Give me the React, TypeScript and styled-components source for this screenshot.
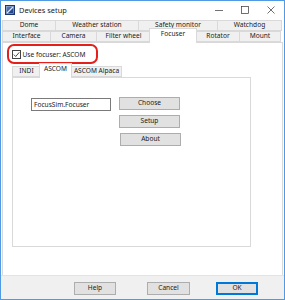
import React from "react";
import styled, { createGlobalStyle } from "styled-components";

const Global = createGlobalStyle`
  html, body { margin: 0; padding: 0; background: #fff; }
  body { font-family: "Noto Sans", "Open Sans", sans-serif; }
  * { box-sizing: border-box; }
`;

const Window = styled.div`
  width: 285px;
  height: 300px;
  border: 1px solid #4f9ae3;
  display: flex;
  flex-direction: column;
  background: #fff;
  font-size: 6.6px;
  color: #1a1a1a;
`;

const TitleBar = styled.div`
  height: 18px;
  display: flex;
  align-items: center;
  padding-left: 4px;
  background: #fff;
`;

const AppIcon = styled.div`
  width: 10px;
  height: 10px;
  background: linear-gradient(135deg, #6f8fbf 0%, #2a4f96 60%, #1c3a78 100%);
  border: 1px solid #1b3670;
  overflow: hidden;
`;

const Title = styled.div`
  margin-left: 4px;
  font-size: 7.4px;
  flex: 1;
`;

const Controls = styled.div`
  display: flex;
  height: 100%;
`;

const CtlBtn = styled.div`
  width: 26px;
  height: 100%;
  display: flex;
  align-items: center;
  justify-content: center;
`;

const TabRow = styled.div<{ $pl: number }>`
  display: flex;
  align-items: flex-end;
  height: 11px;
  padding-left: ${(p) => p.$pl}px;
`;

const Tab = styled.div<{ $w: number; $active?: boolean }>`
  width: ${(p) => p.$w + 1}px;
  margin-right: -1px;
  height: ${(p) => (p.$active ? 15 : 11)}px;
  border: 1px solid #d9d9d9;
  border-bottom: ${(p) => (p.$active ? "none" : "1px solid #d9d9d9")};
  background: ${(p) => (p.$active ? "#fff" : "#f0f0f0")};
  display: flex;
  align-items: ${(p) => (p.$active ? "flex-start" : "center")};
  padding-top: ${(p) => (p.$active ? 2 : 0)}px;
  justify-content: center;
  white-space: nowrap;
  line-height: 1;
  margin-bottom: ${(p) => (p.$active ? -1 : 0)}px;
  margin-left: ${(p) => (p.$active ? -1 : 0)}px;
  position: relative;
  z-index: ${(p) => (p.$active ? 2 : 1)};
`;

const Panel = styled.div`
  flex: 1;
  margin: 0 1px 0 1px;
  border: 1px solid #d9d9d9;
  border-bottom: none;
  background: #fff;
  display: flex;
  flex-direction: column;
  padding-left: 9px;
`;

const Annotation = styled.div`
  margin-top: 1px;
  margin-left: -5px;
  width: 91px;
  height: 20px;
  border: 2.5px solid #e3201b;
  border-radius: 7px;
  display: flex;
  align-items: center;
  padding-left: 2.5px;
`;

const CheckBox = styled.div`
  width: 9px;
  height: 9px;
  border: 1px solid #444;
  background: #fff;
  display: flex;
  align-items: center;
  justify-content: center;
`;

const CheckLabel = styled.span`
  margin-left: 2px;
  white-space: nowrap;
`;

const SubTabs = styled(TabRow)`
  margin-top: 2px;
`;

const InnerPanel = styled.div`
  width: 239px;
  height: 170px;
  border: 1px solid #d9d9d9;
  background: #fff;
  display: flex;
  align-items: flex-start;
  padding: 19px 0 0 18px;
  gap: 8px;
`;

const TextField = styled.div`
  width: 80px;
  height: 13px;
  margin-top: 1px;
  border: 1px solid #7a7a7a;
  background: #fff;
  display: flex;
  align-items: center;
  padding-left: 2px;
  white-space: nowrap;
`;

const ButtonCol = styled.div`
  display: flex;
  flex-direction: column;
  gap: 5px;
`;

const Button = styled.div<{ $w?: number; $dx?: number; $primary?: boolean }>`
  width: ${(p) => p.$w ?? 61}px;
  height: 13px;
  margin-left: ${(p) => p.$dx ?? 0}px;
  background: #e1e1e1;
  border: 1px solid ${(p) => (p.$primary ? "#0078d7" : "#adadad")};
  box-shadow: ${(p) => (p.$primary ? "inset 0 0 0 1px #0078d7" : "none")};
  display: flex;
  align-items: center;
  justify-content: center;
  line-height: 1;
`;

const Footer = styled.div`
  height: 24px;
  background: #f0f0f0;
  border-top: 1px solid #e3e3e3;
  display: flex;
  align-items: flex-start;
  padding-top: 6px;
  padding-left: 73px;
`;

const row1 = [
  { t: "Dome", w: 53 },
  { t: "Weather station", w: 83 },
  { t: "Safety monitor", w: 79 },
  { t: "Watchdog", w: 64 },
];
const row2 = [
  { t: "Interface", w: 48 },
  { t: "Camera", w: 46 },
  { t: "Filter wheel", w: 54 },
  { t: "Focuser", w: 47, a: true },
  { t: "Rotator", w: 43 },
  { t: "Mount", w: 41 },
];
const sub = [
  { t: "INDI", w: 28 },
  { t: "ASCOM", w: 32, a: true },
  { t: "ASCOM Alpaca", w: 50 },
];

export default function App() {
  return (
    <>
      <Global />
      <Window>
        <TitleBar>
          <AppIcon>
            <svg width="8" height="8" viewBox="0 0 8 8" style={{ display: "block" }}>
              <path d="M1 7 L7 1" stroke="#dfe8f5" strokeWidth="1.2" />
              <rect x="0.5" y="0.5" width="7" height="7" fill="none" stroke="#9fb6dc" strokeWidth="0.6" />
            </svg>
          </AppIcon>
          <Title>Devices setup</Title>
          <Controls>
            <CtlBtn>
              <svg width="8" height="8" viewBox="0 0 8 8">
                <path d="M0 4.5 H8" stroke="#333" strokeWidth="0.7" />
              </svg>
            </CtlBtn>
            <CtlBtn>
              <svg width="8" height="8" viewBox="0 0 8 8">
                <rect x="0.5" y="0.5" width="7" height="7" fill="none" stroke="#333" strokeWidth="0.7" />
              </svg>
            </CtlBtn>
            <CtlBtn>
              <svg width="8" height="8" viewBox="0 0 8 8">
                <path d="M0.5 0.5 L7.5 7.5 M7.5 0.5 L0.5 7.5" stroke="#333" strokeWidth="0.7" />
              </svg>
            </CtlBtn>
          </Controls>
        </TitleBar>
        <div style={{ height: 1 }} />
        <TabRow $pl={1}>
          {row1.map((r) => (
            <Tab key={r.t} $w={r.w}>{r.t}</Tab>
          ))}
        </TabRow>
        <TabRow $pl={1}>
          {row2.map((r) => (
            <Tab key={r.t} $w={r.w} $active={r.a}>{r.t}</Tab>
          ))}
        </TabRow>
        <Panel>
          <Annotation>
            <CheckBox>
              <svg width="7" height="7" viewBox="0 0 7 7">
                <path d="M0.8 3.6 L2.7 5.5 L6.3 1.3" fill="none" stroke="#333" strokeWidth="0.9" />
              </svg>
            </CheckBox>
            <CheckLabel>Use focuser: ASCOM</CheckLabel>
          </Annotation>
          <SubTabs $pl={0}>
            {sub.map((r) => (
              <Tab key={r.t} $w={r.w} $active={r.a}>{r.t}</Tab>
            ))}
          </SubTabs>
          <InnerPanel>
            <TextField>FocusSim.Focuser</TextField>
            <ButtonCol>
              <Button>Choose</Button>
              <Button>Setup</Button>
              <Button $dx={1}>About</Button>
            </ButtonCol>
          </InnerPanel>
        </Panel>
        <Footer>
          <Button $w={42}>Help</Button>
          <Button $w={43} $dx={31}>Cancel</Button>
          <Button $w={42} $dx={26} $primary>OK</Button>
        </Footer>
      </Window>
    </>
  );
}
